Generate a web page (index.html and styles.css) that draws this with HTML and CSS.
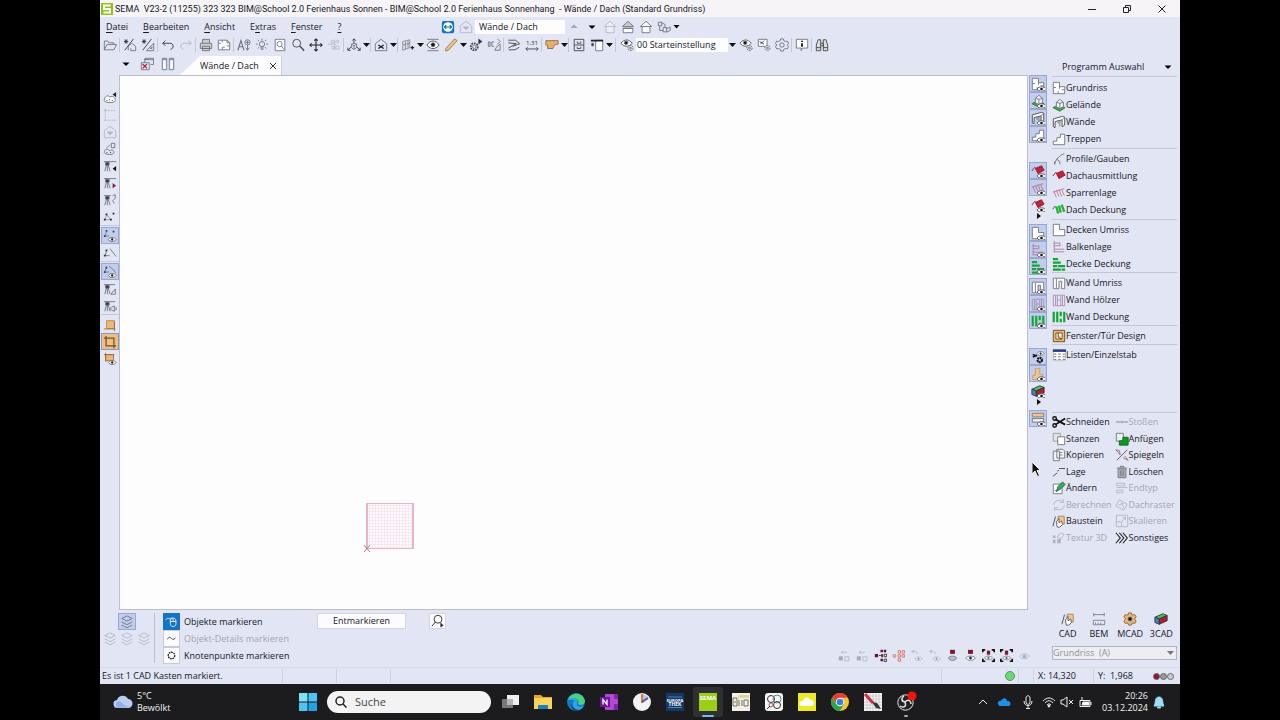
FILE: index.html
```html
<!DOCTYPE html>
<html lang="de">
<head>
    <meta charset="UTF-8">
    <title>SEMA V23-2</title>
    <link rel="stylesheet" href="styles.css">
</head>
<body>
    <svg class="sprite" aria-hidden="true">
        <!-- small eye used on top of the visibility icons -->
        <g id="e"><path d="M6 12c2-3 7-3 9 0c-2 3-7 3-9 0z" fill="#fff" stroke="#666"/><circle cx="10.500" cy="12" r="1.300" fill="#111" stroke="none"/></g>
        <symbol id="open" viewBox="0 0 16 16"><path d="M1.500 13.500v-10h4l1 2h6v2M1.500 13.500l3-6h11l-3 6z"/></symbol>
        <symbol id="house-wand" viewBox="0 0 16 16"><path d="M1 4h5M3.500 1.500v5M2 2l3 4M5 2L2 6M2 14L12 1" stroke="#333"/><path d="M6 14V9.500l4-3.500 4.500 3.500v5H9v-3"/></symbol>
        <symbol id="tri-wand" viewBox="0 0 16 16"><path d="M1 4h5M3.500 1.500v5M2 2l3 4M5 2L2 6M2 14L12 1" stroke="#333"/><path d="M6 14.500h8.500V6zM10.500 12h2v-2z"/></symbol>
        <symbol id="undo" viewBox="0 0 16 16"><path d="M5 3L2 6l3 3M2 6h8c5 0 5 6 1 7" stroke="#333"/></symbol>
        <symbol id="redo" viewBox="0 0 16 16"><path d="M11 3l3 3-3 3M14 6H6c-5 0-5 6-1 7"/></symbol>
        <symbol id="print" viewBox="0 0 16 16"><path d="M4 6V1.500h8V6M1.500 6h13v6h-13zM4 9.500h8v5H4zM4 12h8" fill="#ccc"/></symbol>
        <symbol id="plan" viewBox="0 0 16 16"><path d="M1.500 2.500h10l3 3v8h-13zM1.500 6h3M6 2.500V5M6 13.500v-3h3M14 9h-3M11.500 2.500v3h3" fill="#fff"/></symbol>
        <symbol id="text" viewBox="0 0 16 16"><path d="M1 14L4.500 3 8 14M2 10h5" stroke-width="1.300"/><circle cx="12" cy="5" r="3"/><path d="M10 5h4M12 3v4M12 8v6M10 11l2 3 2-3"/></symbol>
        <symbol id="lamp" viewBox="0 0 16 16"><circle cx="8" cy="7" r="3"/><path d="M7 10v3h2v-3M8 1v2M1 7h2M13 7h2M3 2l1.500 1.500M13 2l-1.500 1.500M3 12l1.500-1.500M13 12l-1.500-1.500"/></symbol>
        <symbol id="page-zoom" viewBox="0 0 16 16"><path d="M2.500 1.500h11v13h-11z" fill="#fff"/><circle cx="7.500" cy="7" r="3"/><path d="M9.500 9l3 4"/></symbol>
        <symbol id="zoom" viewBox="0 0 16 16"><circle cx="6.500" cy="6" r="4.500" stroke="#444"/><path d="M10 9l5 5.500" stroke="#444" stroke-width="1.600"/></symbol>
        <symbol id="move" viewBox="0 0 16 16"><path d="M8 1v14M1 8h14M6 3l2-2 2 2M6 13l2 2 2-2M3 6L1 8l2 2M13 6l2 2-2 2" stroke="#222" stroke-width="1.200"/></symbol>
        <symbol id="nodes" viewBox="0 0 16 16"><circle cx="6" cy="4" r="1.500"/><circle cx="12" cy="4" r="1.500"/><circle cx="7" cy="11" r="1.500"/><circle cx="12" cy="11" r="2"/><path d="M1 7h8M9 2v12"/></symbol>
        <symbol id="axes" viewBox="0 0 16 16"><path d="M8 1v5M5 10l-4 4M11 10l4 4M6 3l2-2 2 2M1 11v3h3M15 11v3h-3" stroke="#333"/><path d="M5 7l3-1 3 1v4l-3 2-3-2zM5 7l3 2 3-2M8 9v4"/></symbol>
        <symbol id="house-x" viewBox="0 0 16 16"><path d="M1.500 6.500L8 1.500l6.500 5v8h-13z"/><path d="M5 8l6 4M11 8l-6 4" stroke="#222" stroke-width="1.700"/></symbol>
        <symbol id="grid-arrow" viewBox="0 0 16 16"><path d="M2 14V4l8-2v9zM5 4v9M8 3v9M2 8l8-2" stroke="#888"/><path d="M11 11h4M13 9v4" stroke="#222" stroke-width="1.400"/></symbol>
        <symbol id="eye-box" viewBox="0 0 16 16"><path d="M1.500 1.500h13M1.500 14.500h13"/><path d="M1 8c4-6 10-6 14 0c-4 5.500-10 5.500-14 0z" fill="#fff" stroke="#444"/><circle cx="8" cy="7.800" r="2.300" fill="#111"/></symbol>
        <symbol id="pencil" viewBox="0 0 16 16"><path d="M2 12L12 1l3 2L5 14l-3 1z" fill="#ecc08a" stroke="#a5783f"/></symbol>
        <symbol id="gear-pen" viewBox="0 0 16 16"><circle cx="6" cy="10" r="4" stroke-dasharray="2 1" stroke-width="2" stroke="#444"/><circle cx="6" cy="10" r="2"/><path d="M11 1l4 3-4 3z" fill="#222"/></symbol>
        <symbol id="dc-pen" viewBox="0 0 16 16"><path d="M1.500 4.500v5h2v-5zM8 4.500H5.500v5H8M9 14l2-4 4-3v7zM12 1l3 3-3 3"/></symbol>
        <symbol id="stair" viewBox="0 0 16 16"><path d="M1.500 2.500h8l5 4-8 3M1.500 5.500l9 1-9 5M2 13.500h7l5-3" stroke="#444"/></symbol>
        <symbol id="measure" viewBox="0 0 16 16"><text x="8" y="8" class="icon-text">1,31</text><path d="M1 12.500h14M3 10.500l-2 2 2 2M13 10.500l2 2-2 2" stroke="#444"/></symbol>
        <symbol id="beam" viewBox="0 0 16 16"><path d="M1 3h14v4c-4 0-5 2-6 5H3V8H1z" fill="#e9ae6c" stroke="#8d6a42"/></symbol>
        <symbol id="cabinet" viewBox="0 0 16 16"><path d="M2.500 1.500h11v13h-11zM2.500 8h11M6 4v2h4V4M6 10v2h4v-2" stroke="#444"/></symbol>
        <symbol id="window" viewBox="0 0 16 16"><path d="M6.500 2.500h8v12h-8z" fill="#fff"/><path d="M1 3h14" stroke="#223" stroke-width="2"/><path d="M2 6h2v3H2z" fill="#223"/></symbol>
        <symbol id="eye-gear" viewBox="0 0 16 16"><path d="M1 6c4-5 9-5 13 0c-4 4.500-9 4.500-13 0z" fill="#fff" stroke="#555"/><circle cx="7" cy="5.500" r="2" fill="#111"/><circle cx="12" cy="11.500" r="3" fill="#dde" stroke-dasharray="2 1" stroke="#666"/><circle cx="12" cy="11.500" r="1"/></symbol>
        <symbol id="x-gear" viewBox="0 0 16 16"><path d="M1.500 1.500h10v8h-10z" fill="#fff"/><path d="M3 4l5 3M8 3L4 7" stroke="#333"/><circle cx="12" cy="11.500" r="3" fill="#dde" stroke-dasharray="2 1"/><circle cx="12" cy="11.500" r="1"/></symbol>
        <symbol id="gear" viewBox="0 0 16 16"><path d="M6.500 1h3l.5 2 2 1 2-.5 1.500 2.500L14 8l1.500 2L14 12.500l-2-.5-2 1-.5 2h-3L6 13l-2-1-2 .5L.500 10 2 8 .500 6 2 3.500l2 .5 2-1z"/><circle cx="8" cy="8" r="2.500"/></symbol>
        <symbol id="info" viewBox="0 0 16 16"><path d="M1.500 1.500h13v10h-6l-1.500 3v-3H1.500z" fill="#fff"/><path d="M8 3v1.500M8 6v4" stroke="#111" stroke-width="2"/></symbol>
        <symbol id="binocular" viewBox="0 0 16 16"><path d="M1.500 14.500V8l2-6h3v12.500zM14.500 14.500V8l-2-6h-3v12.500zM6.500 6h3v3h-3M1.500 11h5M9.500 11h5" stroke="#444" fill="#ddd"/></symbol>
        <symbol id="teamview" viewBox="0 0 16 16"><rect x="1" y="1" width="14" height="14" rx="2" fill="#1273c6" stroke="none"/><circle cx="8" cy="8" r="5.500" fill="#fff" stroke="none"/><path d="M4 8h8M6 6L4 8l2 2M10 6l2 2-2 2" stroke="#1273c6" stroke-width="1.400"/></symbol>
        <symbol id="house-down" viewBox="0 0 16 16"><path d="M1.500 6.500L8 1.500l6.500 5v8h-13z"/><path d="M5 8h6l-3 3z" fill="#666"/></symbol>
        <symbol id="house" viewBox="0 0 16 16"><path d="M3.500 14.500V7h9v7.500z" fill="#fff"/><path d="M1.500 7.500L8 1.500l6.500 6z" fill="#fff"/></symbol>
        <symbol id="house-low" viewBox="0 0 16 16"><path d="M2.500 9.500h11v5h-11z" fill="#fff"/><path d="M1.500 7.500L8 1.500l6.500 6zM2.500 9.500h11" fill="#ccc"/></symbol>
        <symbol id="chain" viewBox="0 0 16 16"><path d="M1.500 2.500h4v4h-4zM3 7v5h4M7 8.500h4v5H7zM11 10l4-2v4l-4 2M5 3l4 2v3"/></symbol>
        <symbol id="up" viewBox="0 0 16 16"><path d="M4 9h8L8 5z" fill="#9ba5be" stroke="none"/></symbol>
        <symbol id="down" viewBox="0 0 16 16"><path d="M1 5h14l-7 7z" fill="#000" stroke="none"/></symbol>
        <symbol id="close-win" viewBox="0 0 16 16"><path d="M5.500 6V1.500h10v7H12M5 3h10"/><path d="M1.500 6.500h9v8h-9z" fill="#eee"/><path d="M3 8l5 5M8 8l-5 5" stroke="#b01030" stroke-width="1.300"/></symbol>
        <symbol id="columns" viewBox="0 0 16 16"><path d="M1.500 1.500h5v13h-5zM9.500 1.500h5v13h-5zM2 3h4M10 3h4" fill="#f4f4fb"/></symbol>
        <symbol id="cloud-l" viewBox="0 0 16 16"><path d="M1.500 11c0-5 4-7 6.500-4 3-2 6 0 6 4 0 3-12 3-12.500 0z" fill="#fff"/><path d="M4 11h1M7 10h1M10 11h1" stroke="#222"/><path d="M15 1v6l-4-3z" fill="#222" stroke="none"/></symbol>
        <symbol id="bracket" viewBox="0 0 16 16"><path d="M14 3H2.500v11M1 3h3M2.500 1v3M1 14h14" stroke-dasharray="2 1"/></symbol>
        <symbol id="cloud-d" viewBox="0 0 16 16"><path d="M1.500 12c0-4 4-5 6-2 3-2 5 0 5 2 0 3-10 3-11 0zM9.500 1.500h4v5h-4zM4 7l4-4"/><path d="M4 12h1M8 12h1" stroke="#222"/></symbol>
        <symbol id="tri-l" viewBox="0 0 16 16"><path d="M1 3h14M2 14L5 3l3 11M5 3v11"/><path d="M3 4h4v3H3z" fill="#333"/><path d="M15 8v6l-4-3z" fill="#111" stroke="none"/></symbol>
        <symbol id="tri-r" viewBox="0 0 16 16"><path d="M1 3h14M2 14L5 3l3 11M5 3v11"/><path d="M3 4h4v3H3z" fill="#333"/><path d="M11 8v6l4-3z" fill="#8a1c3c" stroke="none"/></symbol>
        <symbol id="tri-u" viewBox="0 0 16 16"><path d="M1 3h8M2 14L5 3l3 11M5 3v11M11 3l3-1v4M14 6l-3 3 2 3"/><path d="M3 4h4v3H3z" fill="#333"/></symbol>
        <symbol id="tri-a" viewBox="0 0 16 16"><path d="M1 3h13M2 14L5 3l3 11M5 3v11M9 14h5V8z"/><path d="M3 4h4v3H3z" fill="#333"/></symbol>
        <symbol id="tri-s" viewBox="0 0 16 16"><path d="M1 3h13M2 14L5 3l3 11M5 3v11M9 9v4M10 9l3-1v6l-3-1M15 9v4"/><path d="M3 4h4v3H3z" fill="#333"/></symbol>
        <symbol id="points" viewBox="0 0 16 16"><path d="M4 5L2.500 11h6z" stroke="#999"/><path d="M3 4h2v2H3zM11 3h2v2h-2zM1 10h2v2H1zM8 10h2v2H8z" fill="#223" stroke="none"/></symbol>
        <symbol id="points-eye" viewBox="0 0 16 16"><path d="M4 3L2 8h5" stroke="#777"/><path d="M3 1h2v2H3zM11 2h2v2h-2zM1 7h2v2H1z" fill="#223f9a" stroke="none"/><use href="#e"/></symbol>
        <symbol id="line-points" viewBox="0 0 16 16"><path d="M4 5L2.500 11h5M8 3l7 9"/><path d="M3 4h2v2H3zM1 10h2v2H1z" fill="#333" stroke="none"/></symbol>
        <symbol id="line-eye" viewBox="0 0 16 16"><path d="M4 2L2 8h5M7 1l8 8"/><path d="M3 2h2v2H3zM1 7h2v2H1z" fill="#223f9a" stroke="none"/><use href="#e"/></symbol>
        <symbol id="crop-f" viewBox="0 0 16 16"><path d="M4 3h9v9H4z" fill="#f0b878" stroke="#b98a50"/><path d="M1 12.500h13M13 4v11" stroke="#96703e"/></symbol>
        <symbol id="crop" viewBox="0 0 16 16"><path d="M1 3.500h12M3.500 1v12M3 12.500h12M12.500 3v12" stroke="#6b542e" stroke-width="1.400"/></symbol>
        <symbol id="crop-eye" viewBox="0 0 16 16"><path d="M3 3h9v7H3z" fill="#f0b878" stroke="#96703e"/><path d="M1 3h12M3 1v10" stroke="#96703e"/><use href="#e"/></symbol>

        <symbol id="floor" viewBox="0 0 16 16"><path d="M1.500 1.500h7v5h6v8h-13zM1.500 7.500h3M8.500 6v3M7 14.500v-3M14 10h-3" fill="#fff"/></symbol>
        <symbol id="terrain" viewBox="0 0 16 16"><path d="M1 11l6-3 8 3-6 4z" fill="#3dae3d" stroke="#2c7c2c"/><path d="M5 10V5l4-3.500 4 3.500v5l-4 2z" fill="#f5f5f5"/><path d="M9 12V6M5 5l4 1 4-1"/></symbol>
        <symbol id="wall" viewBox="0 0 16 16"><path d="M1.500 4.500L12 1.500l2.500 1v9l-3 2v-8l-8 2v7l-2-1z" fill="#fff" stroke="#444"/><path d="M7 7v3M9 13V6M11.500 5.500l3-3"/></symbol>
        <symbol id="steps" viewBox="0 0 16 16"><path d="M1.500 14.500v-4h4v-4h4v-4h5v12z" fill="#fff"/></symbol>
        <symbol id="profile" viewBox="0 0 16 16"><path d="M3 14C4 9 8 4 14 2M3 14v-3M5 8l4 3v3" stroke="#66705f"/></symbol>
        <symbol id="roof" viewBox="0 0 16 16"><path d="M1 8l3-4 2 1" stroke="#801c2c"/><path d="M5 5l7-3 3 5-7 4z" fill="#c3203c" stroke="#901c2c"/></symbol>
        <symbol id="rafter" viewBox="0 0 16 16"><path d="M1 7l13-4M2 6l3 7M5 5l3 7M8 4l3 8M11 4l3 7" stroke="#c06f8a"/></symbol>
        <symbol id="cover" viewBox="0 0 16 16"><path d="M1 7l2-3 2 1" stroke="#444"/><path d="M5 4l2 8M8 3l2 8M11 2l3 8" stroke="#19b32c" stroke-width="2.500"/></symbol>
        <symbol id="ceil" viewBox="0 0 16 16"><path d="M1.500 1.500h7v6h6v7h-13z" fill="#fff"/></symbol>
        <symbol id="joist" viewBox="0 0 16 16"><path d="M2.500 1v13M2 3.500h7M2 6.500h7M2 10.500h12M2 13.500h12M9 3v4" stroke="#a77d9f"/></symbol>
        <symbol id="deck" viewBox="0 0 16 16"><path d="M1 2.500h6M1 6.500h9M1 10.500h5M7 10.500h8M1 14.500h9M11 14.500h4" stroke="#13a636" stroke-width="2.500"/></symbol>
        <symbol id="wallout" viewBox="0 0 16 16"><path d="M1.500 2.500h13v12H11V6H8v8.500H1.500zM5 3v11" fill="#fff"/></symbol>
        <symbol id="studs" viewBox="0 0 16 16"><path d="M1.500 2.500h13v12h-13zM4 3v11M6 3v11M10 3v11M12 3v11M6 8h4" stroke="#a78daf"/></symbol>
        <symbol id="wallcov" viewBox="0 0 16 16"><path d="M2 2v12M6 2v12M10 2v5M14 2v12M10 10v4" stroke="#13a636" stroke-width="2.500"/></symbol>
        <symbol id="frame" viewBox="0 0 16 16"><path d="M1.500 1.500h13v13h-13z" fill="#f0b878" stroke="#624318"/><path d="M4.500 4.500h7v7h-7zM7 4.500v5l4 2" fill="#fff" stroke="#624318"/></symbol>
        <symbol id="list" viewBox="0 0 16 16"><path d="M1.500 2.500h14v12h-14z" fill="#fff" stroke="#bbb"/><path d="M1 3h15" stroke="#2c3f79" stroke-width="3"/><path d="M2 7h3M7 7h3M12 7h3M2 10h3M7 10h3M12 10h3M2 13h3M7 13h3M12 13h3" stroke="#666"/></symbol>
        <symbol id="cut" viewBox="0 0 16 16"><path d="M4 5l11 6M4 11l11-7" stroke="#111" stroke-width="2"/><circle cx="3" cy="4" r="2" stroke="#111" stroke-width="1.600"/><circle cx="3" cy="12" r="2" stroke="#111" stroke-width="1.600"/></symbol>
        <symbol id="cut-gear" viewBox="0 0 16 16"><path d="M2 8l5-2M2 5l5 2" stroke="#111" stroke-width="1.700"/><path d="M7 4c2-3 6-3 8 0c-2 3-6 3-8 0z" fill="#fff"/><circle cx="11" cy="4" r="1" fill="#111"/><circle cx="10" cy="11.500" r="2.500" stroke="#111" stroke-width="2.400" stroke-dasharray="2 .6"/></symbol>
        <symbol id="wood" viewBox="0 0 16 16"><path d="M5 1.500h5v7h3v6H2v-5h3z" fill="#f1c58f" stroke="#c59a68"/></symbol>
        <symbol id="cube" viewBox="0 0 16 16"><path d="M1 6l9-4 5 2-9 4z" fill="#43c263" stroke="#333"/><path d="M1 6l5 2v6l-5-2z" fill="#4388bd" stroke="#333"/><path d="M6 8l9-4v6l-9 4z" fill="#b31c36" stroke="#333"/></symbol>
        <symbol id="bars" viewBox="0 0 16 16"><path d="M1.500 1.500h13v4h-13z" fill="#f0c48d" stroke="#8a7d6a"/><path d="M1.500 7.500h13v4h-13z" fill="#e9edf8"/></symbol>
        <symbol id="join" viewBox="0 0 16 16"><path d="M1 8h14" stroke="#667" stroke-width="2"/><path d="M8 6v4"/></symbol>
        <symbol id="punch" viewBox="0 0 16 16"><path d="M1.500 1.500h8v9h-8z" fill="#e4e4e8" stroke="#999"/><path d="M6.500 5.500h8v9h-8z" fill="#fff"/></symbol>
        <symbol id="attach" viewBox="0 0 16 16"><path d="M1.500 1.500h8v9h-8z" fill="#e8f2ea"/><path d="M5 10v5h10V6H9v4z" fill="#0b9b1c" stroke="#0a6a1a"/></symbol>
        <symbol id="copy" viewBox="0 0 16 16"><path d="M1.500 3.500h7v11h-7zM5.500 1.500h7l2 2v8h-9zM8 5h4M8 8h4" fill="#f3f3f3"/></symbol>
        <symbol id="mirror" viewBox="0 0 16 16"><path d="M2 14L14 2" stroke="#555"/><path d="M1 2l4 1 1 5zM9 11l6 3-4-5" stroke="#a5647a"/></symbol>
        <symbol id="pos" viewBox="0 0 16 16"><path d="M1 13l5-4M8 4h7M6 7l2-1" stroke="#444"/></symbol>
        <symbol id="trash" viewBox="0 0 16 16"><path d="M3.500 4.500h9v10h-9zM6 6v7M8 6v7M10 6v7M2 3.500h12M6 3V1.500h4V3" fill="#bbb"/></symbol>
        <symbol id="change" viewBox="0 0 16 16"><path d="M1.500 3.500h10v11h-10zM3 11h3" fill="#fff"/><path d="M5 12l2-6 5-5 3 3-5 5z" fill="#2fb455" stroke="#355"/></symbol>
        <symbol id="endtyp" viewBox="0 0 16 16"><path d="M2 2.500h9v3H2zM2 7.500h12M2 10.500h7v3H2z"/></symbol>
        <symbol id="refresh" viewBox="0 0 16 16"><path d="M2 8c0-6 9-7 11-3M13 1v4H9M14 8c0 6-9 7-11 3M3 15v-4h4"/></symbol>
        <symbol id="raster" viewBox="0 0 16 16"><path d="M5 2l9 5-4 7-9-5zM7 5l3 6M4 8l6-2"/></symbol>
        <symbol id="block" viewBox="0 0 16 16"><path d="M1 14L4 3" stroke="#444"/><path d="M7 2.500h7v9H7z" fill="#f1c58f" stroke="#a4825b"/><path d="M5 9l3-4v5l3-2 1 4-3 3H6z" fill="#fff" stroke="#555"/></symbol>
        <symbol id="scale" viewBox="0 0 16 16"><path d="M1.500 1.500h13v13h-13zM1.500 9h6v5.500M8 8l4-4M9 4h3v3"/></symbol>
        <symbol id="texture" viewBox="0 0 16 16"><path d="M1 5h3v3H1zM1 10h3v4H1zM6 9h4v5H6z" fill="#667" stroke="none"/><path d="M6 7l4-5 4 2-4 5z"/></symbol>
        <symbol id="more" viewBox="0 0 16 16"><path d="M1 2l5 6-5 6M5 2l5 6-5 6M9 2l5 6-5 6" stroke="#222" stroke-width="1.300"/></symbol>
        <symbol id="layers" viewBox="0 0 16 16"><path d="M2 4l6-3 6 3-6 3zM2 8l6 3 6-3M2 11.500l6 3 6-3"/></symbol>
        <symbol id="mouse" viewBox="0 0 16 16"><path d="M1 6c3-5 5 2 7-3M6.500 7.500c0-5 7-5 7 0v3c0 5-7 5-7 0zM10 4v4M6.500 8h7" stroke="#fff"/></symbol>
        <symbol id="wave" viewBox="0 0 16 16"><path d="M3 9c2-4 4-2 5-1s3 2 5-1" stroke="#222"/></symbol>
        <symbol id="knot" viewBox="0 0 16 16"><circle cx="8" cy="8" r="4" stroke="#111" stroke-width="1.600" stroke-dasharray="2 1"/></symbol>
        <symbol id="find" viewBox="0 0 16 16"><circle cx="8" cy="6" r="4.500" stroke="#222"/><path d="M5 9l-4 5" stroke="#222"/><path d="M11 10l3 3-3 2z" fill="#111"/></symbol>
        <symbol id="pair" viewBox="0 0 16 16"><path d="M1 9h5v5H1z" fill="#556" stroke="none"/><path d="M8.500 9.500h5v5h-5zM4 4h7M6 2L4 4l2 2"/></symbol>
        <symbol id="tree-d" viewBox="0 0 16 16"><path d="M6 8h3" stroke="#222"/><path d="M1 6h4v4H1zM8 1h3v3H8zM9 6h2v4H9zM8 12h3v3H8zM12 1h3v3h-3z" fill="#641030" stroke="none"/><path d="M12.500 6.500h3v3h-3zM12.500 12.500h3v3h-3z" stroke="#222"/></symbol>
        <symbol id="tree-o" viewBox="0 0 16 16"><path d="M1.500 7h3v3h-3zM7.500 2h3v3h-3zM7.500 7h3v3h-3zM12.500 2h3v3h-3zM12.500 7h3v3h-3zM7.500 12h3v3h-3z" stroke="#db6a52"/></symbol>
        <symbol id="eye-dim" viewBox="0 0 16 16"><path d="M5 1L2 3l3 2M2 3h4c2 0 3 1 3 3"/><use href="#e"/></symbol>
        <symbol id="mark-hand" viewBox="0 0 16 16"><path d="M5 1h6v5H5z" fill="#7d1535" stroke="none"/><path d="M3 11c2-3 8-3 10 0c-1 4-9 4-10 0z" fill="#b4c2d2"/></symbol>
        <symbol id="mark-eye" viewBox="0 0 16 16"><path d="M5 1h6v5H5z" fill="#7d1535" stroke="none"/><path d="M2 11c3-3 9-3 12 0c-3 4-9 4-12 0z" fill="#fff"/><circle cx="8" cy="11" r="1.500" fill="#111"/></symbol>
        <symbol id="corners" viewBox="0 0 16 16"><path d="M1 4V1h3M12 1h3v3M1 12v3h3M15 12v3h-3" stroke="#111" stroke-width="2"/><path d="M6 2h4v5H6z" fill="#7d1535" stroke="none"/><path d="M3 11c3-3 7-3 10 0c-3 3-7 3-10 0z" fill="#fff"/><circle cx="8" cy="11" r="1" fill="#111"/></symbol>
        <symbol id="eye-only" viewBox="0 0 16 16"><path d="M2 9c3-4 9-4 12 0c-3 4-9 4-12 0z"/><circle cx="8" cy="9" r="2" fill="#667"/></symbol>
        <symbol id="dim" viewBox="0 0 16 16"><path d="M2 3h12M2 1v4M14 1v4M1.500 9.500h13v5h-13zM4 12v2M7 12v2M10 12v2" stroke="#777d91"/></symbol>
        <symbol id="mcad" viewBox="0 0 16 16"><path d="M6.500 1h3l1 2.500 3-.5 1.500 2.500L13 8l2 2.500-1.500 2.500-3-.5L9.500 15h-3l-1-2.500-3 .5L1 10.500 3 8 1 5.500 2.500 3l3 .500z" fill="#e9b775" stroke="#8a6230"/><circle cx="8" cy="8" r="2.300" fill="#111"/></symbol>
    </svg>

    <div class="screen">
        <header class="titlebar">
            <svg class="logo" viewBox="0 0 12 12"><path d="M0 0h12v12H0z" fill="#93c11c"/><path d="M9.500 2.500H3V6h6v3.500H2.500" fill="none" stroke="#fff" stroke-width="2"/></svg>
            <h1>SEMA&nbsp; V23-2 (11255) 323 323 BIM@School 2.0 Ferienhaus Sonnen - BIM@School 2.0 Ferienhaus Sonnenhang&nbsp; - Wände / Dach (Standard Grundriss)</h1>
            <div class="wincontrols">
                <button aria-label="Minimieren"><svg viewBox="0 0 10 10"><path d="M1 5.500h8"/></svg></button>
                <button aria-label="Wiederherstellen"><svg viewBox="0 0 10 10"><path d="M1.500 3.500h5v5h-5zM3.500 3.500v-2h5v5h-2"/></svg></button>
                <button aria-label="Schließen"><svg viewBox="0 0 10 10"><path d="M1.500 1.500l7 7M8.500 1.500l-7 7"/></svg></button>
            </div>
        </header>

        <div class="menubar">
            <nav class="menu">
                <a href="#"><u>D</u>atei</a>
                <a href="#"><u>B</u>earbeiten</a>
                <a href="#"><u>A</u>nsicht</a>
                <a href="#">E<u>x</u>tras</a>
                <a href="#"><u>F</u>enster</a>
                <a href="#"><u>?</u></a>
            </nav>
            <div class="levels">
                <button class="tool" aria-label="Fernwartung"><svg><use href="#teamview"/></svg></button>
                <button class="tool dim" aria-label="Geschoss"><svg><use href="#house-down"/></svg></button>
                <input type="text" class="level-name" aria-label="Bauteilgruppe" value="Wände / Dach">
                <button class="tool" aria-label="Nach oben"><svg><use href="#up"/></svg></button>
                <button class="tool small" aria-label="Nach unten"><svg><use href="#down"/></svg></button>
                <button class="tool dim" aria-label="Haus 1"><svg><use href="#house"/></svg></button>
                <button class="tool" aria-label="Haus 2"><svg><use href="#house-low"/></svg></button>
                <button class="tool" aria-label="Haus 3"><svg><use href="#house"/></svg></button>
                <button class="tool" aria-label="Struktur"><svg><use href="#chain"/></svg></button>
                <i class="caret"></i>
            </div>
        </div>

        <div class="toolbar">
            <button class="tool" aria-label="Öffnen"><svg><use href="#open"/></svg></button>
            <span class="sep"></span>
            <button class="tool" aria-label="Hausassistent"><svg><use href="#house-wand"/></svg></button>
            <button class="tool" aria-label="Assistent"><svg><use href="#tri-wand"/></svg></button>
            <span class="sep"></span>
            <button class="tool" aria-label="Rückgängig"><svg><use href="#undo"/></svg></button>
            <button class="tool dim" aria-label="Wiederholen"><svg><use href="#redo"/></svg></button>
            <span class="sep"></span>
            <button class="tool" aria-label="Drucken"><svg><use href="#print"/></svg></button>
            <button class="tool" aria-label="Plan"><svg><use href="#plan"/></svg></button>
            <span class="sep"></span>
            <button class="tool" aria-label="Text"><svg><use href="#text"/></svg></button>
            <button class="tool" aria-label="Licht"><svg><use href="#lamp"/></svg></button>
            <button class="tool" aria-label="Seite"><svg><use href="#page-zoom"/></svg></button>
            <button class="tool" aria-label="Zoom"><svg><use href="#zoom"/></svg></button>
            <button class="tool" aria-label="Verschieben"><svg><use href="#move"/></svg></button>
            <button class="tool dim" aria-label="Knoten"><svg><use href="#nodes"/></svg></button>
            <span class="sep"></span>
            <button class="tool" aria-label="Achsen"><svg><use href="#axes"/></svg></button>
            <i class="caret"></i>
            <span class="sep"></span>
            <button class="tool" aria-label="Haus"><svg><use href="#house-x"/></svg></button>
            <i class="caret"></i>
            <span class="sep"></span>
            <button class="tool" aria-label="Raster"><svg><use href="#grid-arrow"/></svg></button>
            <i class="caret"></i>
            <button class="tool" aria-label="Sichtbarkeit"><svg><use href="#eye-box"/></svg></button>
            <button class="tool" aria-label="Stift"><svg><use href="#pencil"/></svg></button>
            <i class="caret"></i>
            <button class="tool" aria-label="Stammdaten"><svg><use href="#gear-pen"/></svg></button>
            <button class="tool" aria-label="DC"><svg><use href="#dc-pen"/></svg></button>
            <span class="sep"></span>
            <button class="tool" aria-label="Treppe"><svg><use href="#stair"/></svg></button>
            <button class="tool" aria-label="Messen"><svg><use href="#measure"/></svg></button>
            <span class="sep"></span>
            <button class="tool" aria-label="Balken"><svg><use href="#beam"/></svg></button>
            <i class="caret"></i>
            <span class="sep"></span>
            <button class="tool" aria-label="Archiv"><svg><use href="#cabinet"/></svg></button>
            <button class="tool" aria-label="Fensteraufteilung"><svg><use href="#window"/></svg></button>
            <i class="caret"></i>
            <span class="sep wide"></span>
            <button class="tool" aria-label="Ansichtseinstellung"><svg><use href="#eye-gear"/></svg></button>
            <select class="preset" aria-label="Einstellung"><option>00 Starteinstellung</option></select>
            <i class="caret"></i>
            <button class="tool" aria-label="Sichtbar"><svg><use href="#eye-gear"/></svg></button>
            <button class="tool" aria-label="Ausblenden"><svg><use href="#x-gear"/></svg></button>
            <button class="tool" aria-label="Optionen"><svg><use href="#gear"/></svg></button>
            <span class="sep"></span>
            <button class="tool" aria-label="Info"><svg><use href="#info"/></svg></button>
            <span class="sep"></span>
            <button class="tool" aria-label="Suchen"><svg><use href="#binocular"/></svg></button>
        </div>

        <main class="main">
            <div class="work">
                <div class="tabs">
                    <button class="tool small" aria-label="Liste"><svg><use href="#down"/></svg></button>
                    <button class="tool" aria-label="Fenster schließen"><svg><use href="#close-win"/></svg></button>
                    <button class="tool" aria-label="Teilen"><svg><use href="#columns"/></svg></button>
                    <div class="tab">
                        <span>Wände / Dach</span>
                        <button class="tab-close" aria-label="Tab schließen"><svg viewBox="0 0 8 8"><path d="M1 1l6 6M7 1l-6 6"/></svg></button>
                    </div>
                </div>

                <div class="stage">
                    <div class="strip strip-left">
                        <button class="tool" aria-label="Wolke"><svg><use href="#cloud-l"/></svg></button>
                        <button class="tool dim" aria-label="Rahmen"><svg><use href="#bracket"/></svg></button>
                        <button class="tool dim" aria-label="Haus"><svg><use href="#house-down"/></svg></button>
                        <button class="tool" aria-label="Punktwolke"><svg><use href="#cloud-d"/></svg></button>
                        <button class="tool" aria-label="Station links"><svg><use href="#tri-l"/></svg></button>
                        <button class="tool" aria-label="Station rechts"><svg><use href="#tri-r"/></svg></button>
                        <button class="tool" aria-label="Station"><svg><use href="#tri-u"/></svg></button>
                        <button class="tool" aria-label="Punkte"><svg><use href="#points"/></svg></button>
                        <span class="hsep"></span>
                        <button class="tool on" aria-label="Punkte sichtbar"><svg><use href="#points-eye"/></svg></button>
                        <button class="tool" aria-label="Linien"><svg><use href="#line-points"/></svg></button>
                        <span class="hsep"></span>
                        <button class="tool on" aria-label="Linien sichtbar"><svg><use href="#line-eye"/></svg></button>
                        <button class="tool" aria-label="Winkel"><svg><use href="#tri-a"/></svg></button>
                        <button class="tool" aria-label="Ton"><svg><use href="#tri-s"/></svg></button>
                        <span class="hsep"></span>
                        <button class="tool" aria-label="Fläche"><svg><use href="#crop-f"/></svg></button>
                        <button class="tool on warm" aria-label="Ausschnitt"><svg><use href="#crop"/></svg></button>
                        <button class="tool" aria-label="Ausschnitt sichtbar"><svg><use href="#crop-eye"/></svg></button>
                    </div>

                    <div class="canvas">
                        <svg class="cad-box" width="52" height="52" viewBox="0 0 52 52">
                            <defs>
                                <pattern id="dots" width="3" height="3" patternUnits="userSpaceOnUse"><path d="M0 .500h3M.500 0v3" stroke="#fae6ef" stroke-width="1"/></pattern>
                            </defs>
                            <rect x="4" y="1" width="46" height="46" fill="url(#dots)"/>
                            <path d="M4 1.500h46M4 46.500h46" stroke="#e8b4c4"/>
                            <path d="M4 1v46M50 1v46" stroke="#ecb4c2" stroke-width="2"/>
                            <path d="M1 43l6 7M7 43l-6 7" stroke="#a8808f"/>
                        </svg>
                    </div>

                    <div class="strip strip-right">
                        <div class="group g1">
                            <button class="tool on" aria-label="Grundriss sichtbar"><svg><use href="#floor"/><use href="#e"/></svg></button>
                            <button class="tool on" aria-label="Gelände sichtbar"><svg><use href="#terrain"/><use href="#e"/></svg></button>
                            <button class="tool on" aria-label="Wände sichtbar"><svg><use href="#wall"/><use href="#e"/></svg></button>
                            <button class="tool on" aria-label="Treppen sichtbar"><svg><use href="#steps"/><use href="#e"/></svg></button>
                        </div>
                        <div class="group g2">
                            <button class="tool on" aria-label="Dach sichtbar"><svg><use href="#roof"/><use href="#e"/></svg></button>
                            <button class="tool on" aria-label="Sparren sichtbar"><svg><use href="#rafter"/><use href="#e"/></svg></button>
                            <button class="tool" aria-label="Deckung sichtbar"><svg><use href="#roof"/><use href="#e"/></svg></button>
                            <i class="more"></i>
                        </div>
                        <div class="group g3">
                            <button class="tool on" aria-label="Decken sichtbar"><svg><use href="#ceil"/><use href="#e"/></svg></button>
                            <button class="tool on" aria-label="Balken sichtbar"><svg><use href="#joist"/><use href="#e"/></svg></button>
                            <button class="tool on" aria-label="Decke Deckung sichtbar"><svg><use href="#deck"/><use href="#e"/></svg></button>
                        </div>
                        <div class="group g4">
                            <button class="tool on" aria-label="Wand Umriss sichtbar"><svg><use href="#wallout"/><use href="#e"/></svg></button>
                            <button class="tool on" aria-label="Wand Hölzer sichtbar"><svg><use href="#studs"/><use href="#e"/></svg></button>
                            <button class="tool on" aria-label="Wand Deckung sichtbar"><svg><use href="#wallcov"/><use href="#e"/></svg></button>
                        </div>
                        <div class="group g2">
                            <button class="tool on" aria-label="Bearbeitung sichtbar"><svg><use href="#cut-gear"/></svg></button>
                            <button class="tool on" aria-label="Holz sichtbar"><svg><use href="#wood"/><use href="#e"/></svg></button>
                            <button class="tool" aria-label="3D sichtbar"><svg><use href="#cube"/><use href="#e"/></svg></button>
                            <i class="more"></i>
                        </div>
                        <div class="group g3">
                            <button class="tool on" aria-label="Lagen sichtbar"><svg><use href="#bars"/><use href="#e"/></svg></button>
                        </div>
                        <svg class="pointer" width="10" height="17" viewBox="0 0 10 17"><path d="M1 1v12l3-3 2.500 5.500 2-1L6 9.500h3.500z"/></svg>
                    </div>
                </div>

                <div class="bottom">
                    <div class="layers">
                        <button class="tool on" aria-label="Ebene aktiv"><svg><use href="#layers"/></svg></button>
                        <div class="layer-row">
                            <button class="tool dim" aria-label="Ebene 1"><svg><use href="#layers"/></svg></button>
                            <button class="tool dim" aria-label="Ebene 2"><svg><use href="#layers"/></svg></button>
                            <button class="tool dim" aria-label="Ebene 3"><svg><use href="#layers"/></svg></button>
                        </div>
                    </div>
                    <div class="marking">
                        <button class="mark active"><svg><use href="#mouse"/></svg><span>Objekte markieren</span></button>
                        <button class="mark" disabled><svg><use href="#wave"/></svg><span>Objekt-Details markieren</span></button>
                        <button class="mark"><svg><use href="#knot"/></svg><span>Knotenpunkte markieren</span></button>
                    </div>
                    <button class="unmark">Entmarkieren</button>
                    <button class="search-mark" aria-label="Markierung suchen"><svg><use href="#find"/></svg></button>
                    <div class="marktools">
                        <button class="tool dim" aria-label="Paar"><svg><use href="#pair"/></svg></button>
                        <button class="tool dim" aria-label="Paar zurück"><svg><use href="#pair"/></svg></button>
                        <button class="tool" aria-label="Baum"><svg><use href="#tree-d"/></svg></button>
                        <button class="tool" aria-label="Baum offen"><svg><use href="#tree-o"/></svg></button>
                        <button class="tool dim" aria-label="Zurück"><svg><use href="#eye-dim"/></svg></button>
                        <button class="tool dim" aria-label="Vor"><svg><use href="#eye-dim"/></svg></button>
                        <button class="tool" aria-label="Markiert aus"><svg><use href="#mark-hand"/></svg></button>
                        <button class="tool" aria-label="Markiert an"><svg><use href="#mark-eye"/></svg></button>
                        <button class="tool" aria-label="Nur markiert"><svg><use href="#corners"/></svg></button>
                        <button class="tool" aria-label="Nur markiert an"><svg><use href="#corners"/></svg></button>
                        <button class="tool dim" aria-label="Alle"><svg><use href="#eye-only"/></svg></button>
                    </div>
                </div>
            </div>

            <aside class="panel">
                <div class="panel-head"><span>Programm Auswahl</span><svg><use href="#down"/></svg></div>
                <nav class="programs">
                    <ul>
                        <li><a href="#"><svg><use href="#floor"/></svg>Grundriss</a></li>
                        <li><a href="#"><svg><use href="#terrain"/></svg>Gelände</a></li>
                        <li><a href="#"><svg><use href="#wall"/></svg>Wände</a></li>
                        <li><a href="#"><svg><use href="#steps"/></svg>Treppen</a></li>
                    </ul>
                    <ul>
                        <li><a href="#"><svg><use href="#profile"/></svg>Profile/Gauben</a></li>
                        <li><a href="#"><svg><use href="#roof"/></svg>Dachausmittlung</a></li>
                        <li><a href="#"><svg><use href="#rafter"/></svg>Sparrenlage</a></li>
                        <li><a href="#"><svg><use href="#cover"/></svg>Dach Deckung</a></li>
                    </ul>
                    <ul>
                        <li><a href="#"><svg><use href="#ceil"/></svg>Decken Umriss</a></li>
                        <li><a href="#"><svg><use href="#joist"/></svg>Balkenlage</a></li>
                        <li><a href="#"><svg><use href="#deck"/></svg>Decke Deckung</a></li>
                    </ul>
                    <ul>
                        <li><a href="#"><svg><use href="#wallout"/></svg>Wand Umriss</a></li>
                        <li><a href="#"><svg><use href="#studs"/></svg>Wand Hölzer</a></li>
                        <li><a href="#"><svg><use href="#wallcov"/></svg>Wand Deckung</a></li>
                    </ul>
                    <ul>
                        <li><a href="#"><svg><use href="#frame"/></svg>Fenster/Tür Design</a></li>
                    </ul>
                    <ul>
                        <li><a href="#"><svg><use href="#list"/></svg>Listen/Einzelstab</a></li>
                    </ul>
                </nav>
                <div class="actions">
                    <button><svg><use href="#cut"/></svg>Schneiden</button>
                    <button disabled><svg><use href="#join"/></svg>Stoßen</button>
                    <button><svg><use href="#punch"/></svg>Stanzen</button>
                    <button><svg><use href="#attach"/></svg>Anfügen</button>
                    <button><svg><use href="#copy"/></svg>Kopieren</button>
                    <button><svg><use href="#mirror"/></svg>Spiegeln</button>
                    <button><svg><use href="#pos"/></svg>Lage</button>
                    <button><svg><use href="#trash"/></svg>Löschen</button>
                    <button><svg><use href="#change"/></svg>Ändern</button>
                    <button disabled><svg><use href="#endtyp"/></svg>Endtyp</button>
                    <button disabled><svg><use href="#refresh"/></svg>Berechnen</button>
                    <button disabled><svg><use href="#raster"/></svg>Dachraster</button>
                    <button><svg><use href="#block"/></svg>Baustein</button>
                    <button disabled><svg><use href="#scale"/></svg>Skalieren</button>
                    <button disabled><svg><use href="#texture"/></svg>Textur 3D</button>
                    <button><svg><use href="#more"/></svg>Sonstiges</button>
                </div>
                <div class="modes">
                    <button><svg><use href="#block"/></svg>CAD</button>
                    <button><svg><use href="#dim"/></svg>BEM</button>
                    <button><svg><use href="#mcad"/></svg>MCAD</button>
                    <button><svg><use href="#cube"/></svg>3CAD</button>
                </div>
                <div class="view-select">
                    <select aria-label="Ansicht" disabled><option>Grundriss&nbsp; (A)</option></select>
                    <i class="caret"></i>
                </div>
            </aside>
        </main>

        <div class="statusbar">
            <span class="message">Es ist 1 CAD Kasten markiert.</span>
            <span class="cell"></span>
            <span class="cell"></span>
            <span class="cell fill"></span>
            <span class="cell light"><i class="lamp"></i></span>
            <span class="cell gap"></span>
            <span class="cell coord">X: 14,320</span>
            <span class="cell coord">Y:&nbsp; 1,968</span>
            <span class="leds"><i class="red"></i><i class="grey"></i><i class="pale"></i></span>
        </div>

        <footer class="taskbar">
            <div class="weather">
                <svg width="20" height="14" viewBox="0 0 20 14"><path d="M5 13a4 4 0 0 1-1-8 6 6 0 0 1 11-1 4.500 4.500 0 0 1 0 9z" fill="#b9cdf3"/><path d="M5 13a4 4 0 0 1 0-7c4 0 3 4 12 6z" fill="#8fb0ea"/></svg>
                <p>5°C<br>Bewölkt</p>
            </div>
            <button class="start" aria-label="Start"><svg width="18" height="18" viewBox="0 0 18 18"><path d="M0 0h8.500v8.500H0z" fill="#7fe0fb"/><path d="M9.500 0H18v8.500H9.500zM0 9.500h8.500V18H0z" fill="#4cc4f2"/><path d="M9.500 9.500H18V18H9.500z" fill="#22a2e6"/></svg></button>
            <label class="search">
                <svg width="12" height="12" viewBox="0 0 12 12"><circle cx="5" cy="5" r="4"/><path d="M8 8l3.500 3.500"/></svg>
                <input type="text" placeholder="Suche" aria-label="Suche">
            </label>
            <div class="apps">
                <a href="#" aria-label="Taskansicht"><svg viewBox="0 0 18 18"><path d="M1 6h11v9H1z" fill="#777"/><path d="M6 2h12v10H6z" fill="#efefef"/><path d="M6 6h6v6H6z" fill="#b5b5b5"/></svg></a>
                <a href="#" aria-label="Explorer"><svg viewBox="0 0 18 18"><path d="M0 2h7l2 2h9v12H0z" fill="#e5a81d"/><path d="M0 5h18v11H0z" fill="#fbd35b"/><path d="M4 16v-4h10v4z" fill="#1583c7"/></svg></a>
                <a href="#" aria-label="Edge"><svg viewBox="0 0 18 18"><circle cx="9" cy="9" r="9" fill="#1478c8"/><path d="M1 7C3-1 16-2 18 8c0 4-5 5-7 3 2-5-4-7-10-4z" fill="#4bcf80"/><path d="M1 7c5-4 11-1 9 3-1 3 3 5 7 3-4 6-12 5-12 0 0-3 1-4 3-5-3-2-6-1-7-1z" fill="#2ea7df"/><path d="M6 9c-2 4 1 8 7 8-6 3-11-3-7-8z" fill="#123f82"/></svg></a>
                <a href="#" aria-label="OneNote"><svg viewBox="0 0 18 18"><path d="M5 1h13v16H5z" fill="#b249d2"/><path d="M14 1h4v5h-4zM14 11h4v6h-4z" fill="#8126a8"/><path d="M0 4h10v10H0z" fill="#73159a"/><path d="M3 11.500v-5l4 5v-5" fill="none" stroke="#fff" stroke-width="1.300"/></svg></a>
                <a href="#" aria-label="Uhr"><svg viewBox="0 0 18 18"><circle cx="9" cy="9" r="9" fill="#f4f1f5"/><path d="M9 9V1a8 8 0 0 1 6 3z" fill="#c3bff0"/><path d="M9 10V1" stroke="#d67b37" stroke-width="2"/><path d="M9 9l6-4" stroke="#385ca6" stroke-width="2"/></svg></a>
                <a href="#" aria-label="Europathek"><svg viewBox="0 0 18 18"><path d="M0 0h18v18H0z" fill="#113a69"/><path d="M2 4h14M2 14.500h14" stroke="#8facc8" stroke-width=".6"/><text x="9" y="8.500" class="app-text tiny">EUROPA</text><text x="9" y="13" class="app-text">THEK</text></svg></a>
                <a href="#" class="current" aria-label="SEMA"><svg viewBox="0 0 18 18"><path d="M0 0h18v18H0z" fill="#9bcd19"/><text x="9" y="7" class="app-text sema">SEMA</text></svg></a>
                <a href="#" aria-label="Viewer"><svg viewBox="0 0 18 18"><path d="M0 0h18v18H0z" fill="#f2f0e8"/><path d="M1 5h4v8H1zM2 9h2M7 7v6M10 7v6M12 7h4v6h-4z" fill="none" stroke="#777356"/><path d="M6 2h11v3H6z" fill="#dfd6a3"/></svg></a>
                <a href="#" aria-label="Analyse"><svg viewBox="0 0 18 18"><rect width="18" height="18" rx="3" fill="#f5f5f5"/><g fill="none" stroke="#333"><circle cx="6" cy="6" r="3.500"/><circle cx="12" cy="6" r="4" stroke="#5b8a82"/><circle cx="12" cy="12" r="3.500"/><circle cx="6" cy="12" r="2" stroke="#aa5961"/><path d="M5 13l-3 3"/></g></svg></a>
                <a href="#" aria-label="Cloud"><svg viewBox="0 0 18 18"><path d="M0 0h18v18H0z" fill="#efea26"/><path d="M3 13c-3-2-1-6 2-5 1-5 7-4 7-1 5-1 5 6 1 6z" fill="#fff"/></svg></a>
                <a href="#" aria-label="Chrome"><svg viewBox="0 0 18 18"><circle cx="9" cy="9" r="9" fill="#fac52e"/><path d="M1.200 4.500A9 9 0 0 1 16.800 4.500L9 5 5.500 11z" fill="#e34334"/><path d="M1.200 4.500A9 9 0 0 0 9 18l4-7-8 0z" fill="#2ea350"/><circle cx="9" cy="9" r="4.200" fill="#fff"/><circle cx="9" cy="9" r="3.300" fill="#3c7de4"/></svg></a>
                <a href="#" aria-label="Raster"><svg viewBox="0 0 18 18"><path d="M0 0h18v18H0z" fill="#f5f5f5"/><path d="M0 3h18M0 6h18M0 9h18M0 12h18M0 15h18M3 0v18M6 0v18M9 0v18M12 0v18M15 0v18" stroke="#aaa" stroke-width=".5"/><path d="M1 1l8 9" stroke="#d32c4c" stroke-width="3"/><path d="M8 9l5 1 4 6-5-1z" fill="#333"/></svg></a>
                <a href="#" class="running" aria-label="OBS"><svg viewBox="0 0 18 18"><circle cx="8.500" cy="9.500" r="7.700" fill="#222" stroke="#e6e6e6"/><path d="M8 9C3 8 5 4 7 3M8 9c4-4 6 0 6 2M8 9c2 5-2 6-5 4" fill="none" stroke="#e6e6e6" stroke-width="1.500"/><circle cx="15" cy="3" r="4.500" fill="#f21313"/></svg></a>
            </div>
            <div class="tray">
                <svg viewBox="0 0 14 14"><path d="M3 9l4-4 4 4"/></svg>
                <svg class="tray-wide" viewBox="0 0 14 14"><path d="M3 11c-4-1-2-6 1-5 2-4 6-3 6 0 4-1 5 5 1 5z" fill="#1d8fe6" stroke="none"/></svg>
                <svg class="tray-wide" viewBox="0 0 14 14"><path d="M5 3c0-3 4-3 4 0v4c0 3-4 3-4 0zM3 6c0 6 8 6 8 0M7 11v3M5 13.500h4"/></svg>
                <svg viewBox="0 0 14 14"><path d="M1 6c4-4 8-4 12 0M3 8c3-3 5-3 8 0M5 10c1.500-1.500 2.500-1.500 4 0"/><circle cx="7" cy="11" r="1" fill="#fff"/></svg>
                <svg viewBox="0 0 14 14"><path d="M1 5h2l4-3v10L3 9H1zM9 5l4 4M13 5L9 9"/></svg>
                <svg viewBox="0 0 14 14"><path d="M2 5.500h10v6H2zM13 7v3"/><path d="M5 7h6v3H4zM4 2v4" fill="#fff"/></svg>
                <p>20:26<br>03.12.2024</p>
                <svg class="bell" viewBox="0 0 14 14"><path d="M2 11c2-2 0-9 5-9s3 7 5 9zM5.500 12h3v1h-3z"/></svg>
            </div>
        </footer>
    </div>
</body>
</html>
```
FILE: styles.css
```css
* {
    box-sizing: border-box;
}
body {
    margin: 0;
    padding: 0 100px;
    background-color: #000;
    color: #17181f;
    font-family: 'Open Sans', 'Noto Sans', sans-serif;
    font-size: 9px;
    line-height: 12px;
}
button, input, select {
    font: inherit;
    color: inherit;
    border: none;
    background: none;
    padding: 0;
    margin: 0;
}
select {
    appearance: none;
}
a {
    color: inherit;
    text-decoration: none;
}
p, ul, h1 {
    margin: 0;
    padding: 0;
}
ul {
    list-style: none;
}
.sprite {
    display: none;
}
.screen {
    display: flex;
    flex-direction: column;
    min-height: 100vh;
    background-color: #e2e5f4;
}

/* title and menu */
.titlebar {
    display: flex;
    align-items: center;
    gap: 2px;
    height: 17px;
    padding-left: 1px;
    background-color: #f6f4f7;
}
.logo {
    width: 12px;
    height: 12px;
}
.titlebar h1 {
    flex: 1;
    font-family: Roboto, 'Open Sans', sans-serif;
    font-size: 9px;
    font-weight: normal;
    white-space: nowrap;
}
.wincontrols {
    display: flex;
    padding-right: 1px;
}
.wincontrols button {
    display: grid;
    place-items: center;
    width: 35px;
}
.wincontrols svg {
    width: 10px;
    height: 10px;
    fill: none;
    stroke: #222;
}
.menubar {
    display: flex;
    align-items: center;
    height: 19px;
}
.menu {
    display: flex;
    gap: 15px;
    width: 339px;
    padding-left: 6px;
}
.menu u {
    text-underline-offset: 2px;
}
.levels {
    display: flex;
    align-items: center;
}
.level-name {
    width: 90px;
    height: 14px;
    padding-left: 4px;
    background-color: #fdfdfe;
}

/* icon buttons */
.tool {
    display: grid;
    place-items: center;
    flex: none;
    width: 18px;
    height: 17px;
}
.tool svg, .mark svg, .panel svg, .search-mark svg {
    width: 14px;
    height: 14px;
    fill: none;
    stroke: #6c7181;
    stroke-width: 1;
}
.tool.small svg {
    width: 8px;
    height: 8px;
}
.dim svg {
    opacity: 0.4;
}
.on {
    background-color: #c2cdee;
    border: 1px solid #9aa6cc;
}
.icon-text {
    fill: #333;
    stroke: none;
    font-size: 7px;
    text-anchor: middle;
}
.caret {
    flex: none;
    width: 7px;
    height: 4px;
    background-color: #111;
    clip-path: polygon(0 0, 100% 0, 50% 100%);
}
.toolbar {
    display: flex;
    align-items: center;
    height: 18px;
    padding-left: 1px;
}
.sep {
    width: 1px;
    height: 14px;
    margin-right: 1px;
    background-color: #c3c7d6;
}
.sep.wide {
    margin: 0 2px;
}
.preset {
    width: 92px;
    height: 14px;
    padding-left: 1px;
    background-color: #fdfdfe;
}
.preset + .caret {
    margin: 0 1px;
}

/* work area */
.main {
    display: flex;
    flex: 1;
}
.work {
    display: flex;
    flex: 1;
    flex-direction: column;
}
.tabs {
    display: flex;
    gap: 3px;
    height: 21px;
    padding-left: 17px;
}
.tabs .tool {
    height: 19px;
}
.tab {
    display: flex;
    align-items: center;
    gap: 10px;
    height: 19px;
    margin-top: 2px;
    padding: 0 4px 0 20px;
    background-color: #fdfcfe;
    border-right: 1px solid #b9bed0;
    clip-path: polygon(20px 0, 100% 0, 100% 100%, 0 100%);
}
.tab-close svg {
    display: block;
    width: 8px;
    height: 8px;
    stroke: #333;
}
.stage {
    display: flex;
    flex: 1;
}
.strip {
    position: relative;
    width: 19px;
}
.strip-left {
    padding: 14px 0 0 1px;
}
.hsep {
    display: block;
    height: 1px;
    margin-bottom: 1px;
    background-color: #c3c9dd;
}
.warm {
    background-color: #eebe82;
    border-color: #8997c4;
}
.canvas {
    position: relative;
    flex: 1;
    background-color: #fefdfe;
    border: 1px solid #b9bdcd;
}
.cad-box {
    position: absolute;
    left: 243px;
    bottom: 55px;
}
.strip-right {
    width: 21px;
    padding-left: 1px;
}
.g2 {
    margin-top: 19px;
}
.g3 {
    margin-top: 5px;
}
.g4 {
    margin-top: 3px;
}
.more {
    display: block;
    width: 4px;
    height: 6px;
    margin: 0 auto;
    background-color: #111;
    clip-path: polygon(0 0, 100% 50%, 0 100%);
}
.pointer {
    position: absolute;
    top: 386px;
    left: 3px;
    fill: #111;
    stroke: #eee;
}

/* marking area */
.bottom {
    display: flex;
    height: 57px;
    padding-top: 3px;
}
.layers {
    width: 55px;
    padding-left: 1px;
    border-right: 1px solid #b9bed0;
    margin-bottom: 4px;
}
.layers > .tool {
    margin-left: 17px;
}
.layer-row {
    display: flex;
}
.layer-row .tool {
    width: 17px;
}
.marking {
    width: 154px;
    margin-left: 8px;
}
.mark {
    display: flex;
    align-items: center;
    gap: 4px;
    height: 17px;
    white-space: nowrap;
}
.mark svg {
    width: 17px;
    height: 17px;
    padding: 1px;
    background-color: #fbfbfe;
    border: 1px solid #c6cadb;
}
.mark.active svg {
    background-color: #1673c4;
    border-color: #1673c4;
}
.mark:disabled, .actions button:disabled {
    color: #a3a7b6;
}
.unmark, .search-mark {
    height: 16px;
    background-color: #fcfcfe;
    border: 1px solid #d3d6e4;
}
.unmark {
    width: 89px;
}
.search-mark {
    display: grid;
    place-items: center;
    width: 17px;
    margin-left: 23px;
}
.marktools {
    display: flex;
    align-self: flex-end;
    margin: 0 16px 3px auto;
}
.marktools .tool svg {
    width: 13px;
    height: 13px;
}

/* right panel */
.panel {
    display: flex;
    flex-direction: column;
    width: 131px;
    padding: 4px 3px 7px 3px;
}
.panel-head {
    display: flex;
    align-items: center;
    justify-content: space-between;
    height: 18px;
    padding: 0 5px 0 10px;
}
.panel-head svg {
    width: 8px;
    height: 8px;
}
.programs ul {
    padding-top: 1px;
    border-top: 1px solid #c3c7d6;
}
.programs a {
    display: flex;
    align-items: center;
    height: 17px;
}
.panel .programs svg, .panel .actions svg {
    width: 14px;
    height: 14px;
}
.programs ul:first-child {
    padding: 2px 0 1px;
}
.programs ul:nth-child(2) {
    padding-bottom: 1px;
}
.actions {
    display: grid;
    grid-template-columns: 1fr 1fr;
    grid-template-rows: repeat(8, 1fr);
    height: 134px;
    margin-top: 49px;
    padding-top: 1px;
    border-top: 1px solid #c3c7d6;
}
.actions button {
    display: flex;
    align-items: center;
    white-space: nowrap;
}
.actions button:disabled svg {
    opacity: 0.4;
}
.modes {
    display: grid;
    grid-template-columns: repeat(4, 1fr);
    margin-top: auto;
}
.modes button {
    display: flex;
    flex-direction: column;
    align-items: center;
    gap: 2px;
}
.view-select {
    display: flex;
    align-items: center;
    height: 14px;
    margin-top: 6px;
    padding-right: 2px;
    background-color: #eeeef2;
    border: 1px solid #b3b6c2;
}
.view-select select {
    flex: 1;
    color: #8d909b;
    opacity: 1;
}
.view-select .caret {
    background-color: #777;
}

/* status line */
.statusbar {
    display: flex;
    align-items: center;
    height: 17px;
    padding-left: 2px;
    border-top: 1px solid #d7daea;
}
.message {
    width: 180px;
}
.cell {
    display: flex;
    align-items: center;
    width: 54px;
    height: 14px;
    border-left: 1px solid #cfd3e4;
}
.cell.fill {
    flex: 1;
}
.cell.light {
    width: 77px;
    justify-content: flex-end;
    padding-right: 3px;
}
.cell.gap {
    width: 15px;
}
.cell.coord {
    width: 60px;
    padding-left: 4px;
}
.lamp {
    width: 10px;
    height: 10px;
    border-radius: 50%;
    background-color: #6cd873;
    border: 1px solid #4d9d59;
}
.leds {
    display: flex;
    padding-right: 6px;
}
.leds i {
    width: 7px;
    height: 7px;
    border-radius: 50%;
    border: 1px solid #666;
}
.red {
    background-color: #8d1438;
}
.grey {
    background-color: #999;
}
.pale {
    background-color: #ccc;
}

/* windows taskbar */
.taskbar {
    display: flex;
    align-items: center;
    height: 36px;
    color: #f3f3f3;
    background-color: #1c1c1e;
}
.weather {
    display: flex;
    align-items: center;
    gap: 4px;
    width: 199px;
    padding-left: 13px;
}
.start svg {
    display: block;
}
.search {
    display: flex;
    align-items: center;
    gap: 8px;
    width: 164px;
    height: 22px;
    margin: 0 4px 0 10px;
    padding-left: 8px;
    border-radius: 11px;
    background-color: #f4f3f4;
}
.search svg {
    fill: none;
    stroke: #222;
    stroke-width: 1.500;
}
.search input {
    width: 100px;
    font-size: 11px;
}
.search input::placeholder {
    color: #444;
    opacity: 1;
}
.apps {
    display: flex;
    gap: 3px;
}
.apps a {
    position: relative;
    display: grid;
    place-items: center;
    width: 30px;
    height: 30px;
    border-radius: 3px;
}
.apps svg {
    width: 18px;
    height: 18px;
    overflow: visible;
}
.apps .current {
    background-color: #303033;
}
.current::after, .running::after {
    content: "";
    position: absolute;
    bottom: 0;
    width: 12px;
    height: 2px;
    border-radius: 1px;
    background-color: #76b9ed;
}
.running::after {
    width: 4px;
    background-color: #aaa;
}
.app-text {
    fill: #fff;
    font-size: 5px;
    font-weight: bold;
    text-anchor: middle;
}
.tiny {
    font-size: 4px;
}
.sema {
    font-size: 6px;
}
.tray {
    display: flex;
    align-items: center;
    gap: 4px;
    margin-left: auto;
    padding-right: 14px;
}
.tray svg {
    width: 14px;
    height: 14px;
    fill: none;
    stroke: #eee;
}
.tray .tray-wide {
    margin: 0 3px;
}
.tray p {
    width: 52px;
    text-align: right;
}
.tray .bell {
    fill: #9edcf4;
    stroke: #9edcf4;
}
```
